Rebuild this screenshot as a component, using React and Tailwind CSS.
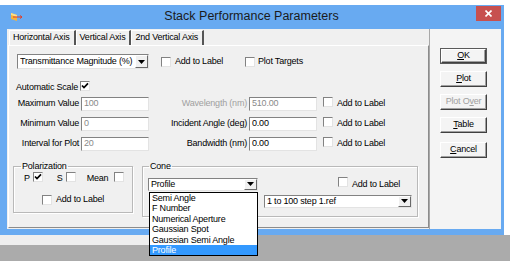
import React from "react";

const sunken = "border border-[#828282] border-b-[#e3e3e3] border-r-[#e3e3e3]";

function Check({ checked }) {
  return (
    <span className={`inline-flex w-[10px] h-[10px] shrink-0 bg-white items-center justify-center ${sunken}`}>
      {checked && (
        <svg width="8" height="8" viewBox="0 0 8 8">
          <path d="M1 3.5 L3 5.6 L7 1.4" stroke="#000" strokeWidth="1.7" fill="none" />
        </svg>
      )}
    </span>
  );
}

function Arrow() {
  return (
    <span className="w-[13px] h-full shrink-0 bg-[#f0f0f0] border border-white border-b-[#696969] border-r-[#696969] flex items-center justify-center">
      <svg width="7" height="4" viewBox="0 0 7 4">
        <path d="M0 0 H7 L3.5 4 Z" fill="#000" />
      </svg>
    </span>
  );
}

function Select({ value, className }) {
  return (
    <div className={`flex items-center bg-white pl-[2px] ${sunken} ${className}`}>
      <span className="flex-1 overflow-hidden leading-none">{value}</span>
      <Arrow />
    </div>
  );
}

function Field({ value, dim }) {
  return (
    <div className={`w-[68px] h-[14px] bg-white flex items-center pl-[2px] ${sunken} ${dim ? "text-[#8a8a8a]" : "text-black"}`}>
      {value}
    </div>
  );
}

function Btn({ children, disabled, primary }) {
  return (
    <div className={`w-[47px] h-[16px] ${primary ? "border border-[#5a5a5a]" : ""}`}>
      <div className={`w-full h-full flex items-center justify-center border border-white border-b-[#404040] border-r-[#404040] shadow-[inset_-1px_-1px_0_#a0a0a0] ${disabled ? "text-[#a0a0a0]" : "text-black"}`}>
        {children}
      </div>
    </div>
  );
}

function Row({ left, leftVal, leftDim, right, rightVal, rightDim, rightLabelDim }) {
  return (
    <div className="flex items-center h-[14px]">
      <span className="w-[70px] text-right">{left}</span>
      <span className="ml-[2px]"><Field value={leftVal} dim={leftDim} /></span>
      <span className={`w-[98px] text-right ${rightLabelDim ? "text-[#a0a0a0]" : ""}`}>{right}</span>
      <span className="ml-[2px]"><Field value={rightVal} dim={rightDim} /></span>
      <span className="ml-[6px]"><Check /></span>
      <span className="ml-[4px]">Add to Label</span>
    </div>
  );
}

export default function App() {
  const coneItems = ["Semi Angle", "F Number", "Numerical Aperture", "Gaussian Spot", "Gaussian Semi Angle"];

  return (
    <div className="w-[510px] h-[261px] bg-[#ababab] flex flex-col overflow-hidden relative whitespace-nowrap text-[9px] tracking-[-0.2px] text-black font-['Liberation_Sans',sans-serif]">
      <div className="flex h-[235px] bg-white shrink-0">
        {/* window */}
        <div className="w-[504px] mt-[5px] bg-[#68aaf1] flex flex-col">
          {/* title bar */}
          <div className="h-[24px] flex items-start relative">
            <svg className="mt-[7px] ml-[10px]" width="13" height="10" viewBox="0 0 13 10">
              <path d="M1 1 L7 3 L7 9 L1 7 Z" fill="#f4b23c" />
              <path d="M1 1 L7 3 L7 5 L1 3 Z" fill="#fbe08a" />
              <path d="M3 5 H12 M10 3.5 L12 5 L10 6.5" stroke="#e0402a" strokeWidth="1" fill="none" />
            </svg>
            <div className="flex-1 text-center pt-[5px] pl-[4px] text-[12.5px] tracking-normal leading-none text-[#1b1b1b]">
              Stack Performance Parameters
            </div>
            <div className="w-[25px] h-[15px] mt-[1px] mr-[3px] bg-[#c7504f] flex items-center justify-center">
              <svg width="7" height="7" viewBox="0 0 7 7">
                <path d="M0.5 0.5 L6.5 6.5 M6.5 0.5 L0.5 6.5" stroke="#fff" strokeWidth="1.6" />
              </svg>
            </div>
          </div>

          {/* client */}
          <div className="ml-[7px] mr-[3px] h-[200px] bg-[#f0f0f0] flex">
            {/* tab control */}
            <div className="w-[422px] flex flex-col">
              <div className="h-[16px] flex items-end pl-[2px]">
                {["Horizontal Axis", "Vertical Axis", "2nd Vertical Axis"].map((t) => (
                  <div key={t} className="h-[15px] flex items-center pl-[3px] pr-[4px] border-t border-l border-white border-r-2 border-r-[#555]">
                    {t}
                  </div>
                ))}
              </div>
              <div className="flex-1 ml-[1px] mb-[1px] border border-white border-r-[#8c8c8c] border-b-[#8c8c8c] flex flex-col">
                {/* row 1 */}
                <div className="flex items-center mt-[8px] ml-[8px]">
                  <Select value="Transmittance Magnitude (%)" className="w-[132px] h-[15px]" />
                  <div className="w-[84px] ml-[12px] flex items-center">
                    <Check />
                    <span className="ml-[4px]">Add to Label</span>
                  </div>
                  <Check />
                  <span className="ml-[3px]">Plot Targets</span>
                </div>
                {/* automatic scale */}
                <div className="flex items-center h-[11px] mt-[13px] ml-[7px]">
                  <span>Automatic Scale</span>
                  <span className="ml-[2px]"><Check checked /></span>
                </div>
                <div className="flex flex-col gap-[6px] mt-[4px]">
                  <Row left="Maximum Value" leftVal="100" leftDim right="Wavelength (nm)" rightLabelDim rightVal="510.00" rightDim />
                  <Row left="Minimum Value" leftVal="0" leftDim right="Incident Angle (deg)" rightVal="0.00" />
                  <Row left="Interval for Plot" leftVal="20" leftDim right="Bandwidth (nm)" rightVal="0.00" />
                </div>
                {/* group boxes */}
                <div className="flex mt-[10px] ml-[4px] items-start">
                  <fieldset className="w-[120px] h-[52px] border border-[#b9b9b9] shadow-[inset_1px_1px_0_#fff,1px_1px_0_#fff]">
                    <legend className="ml-[7px] px-[1px] leading-[10px]">Polarization</legend>
                    <div className="flex items-center h-[10px] mt-[3px] pl-[10px]">
                      <span>P</span>
                      <span className="ml-[3px]"><Check checked /></span>
                      <span className="ml-[14px]">S</span>
                      <span className="ml-[3px]"><Check /></span>
                      <span className="ml-[11px]">Mean</span>
                      <span className="ml-[6px]"><Check /></span>
                    </div>
                    <div className="flex items-center h-[10px] mt-[11px] pl-[28px]">
                      <Check />
                      <span className="ml-[4px]">Add to Label</span>
                    </div>
                  </fieldset>
                  <fieldset className="w-[276px] h-[56px] ml-[9px] border border-[#b9b9b9] shadow-[inset_1px_1px_0_#fff,1px_1px_0_#fff]">
                    <legend className="ml-[6px] px-[1px] leading-[10px]">Cone</legend>
                    <div className="flex items-center mt-[6px] pl-[5px]">
                      <Select value="Profile" className="w-[110px] h-[13px]" />
                      <span className="ml-[80px]"><Check /></span>
                      <span className="ml-[4px]">Add to Label</span>
                    </div>
                    <div className="flex mt-[3px] pl-[121px]">
                      <Select value="1 to 100 step 1.ref" className="w-[148px] h-[13px]" />
                    </div>
                  </fieldset>
                </div>
              </div>
            </div>
            {/* buttons */}
            <div className="flex-1 bg-[#f4f4f4] border-l border-[#a8a8a8] flex flex-col pt-[19px] pl-[10px] gap-[7px]">
              <Btn primary><span><u>O</u>K</span></Btn>
              <Btn><span><u>P</u>lot</span></Btn>
              <Btn disabled><span>Plot O<u>v</u>er</span></Btn>
              <Btn><span><u>T</u>able</span></Btn>
              <div className="mt-[2px]">
                <Btn><span><u>C</u>ancel</span></Btn>
              </div>
            </div>
          </div>
        </div>
      </div>
      <div className="w-[258px] h-[10px] bg-[#eeeeee]" />

      {/* open drop-down list of the Cone select */}
      <div className="absolute left-[149px] top-[192px] w-[109px] border border-black bg-white flex flex-col">
        {coneItems.map((t) => (
          <div key={t} className="h-[10.4px] leading-[10.4px] pl-[2px]">{t}</div>
        ))}
        <div className="h-[10.4px] leading-[10.4px] pl-[2px] bg-[#3399ff] text-white">Profile</div>
      </div>
    </div>
  );
}
